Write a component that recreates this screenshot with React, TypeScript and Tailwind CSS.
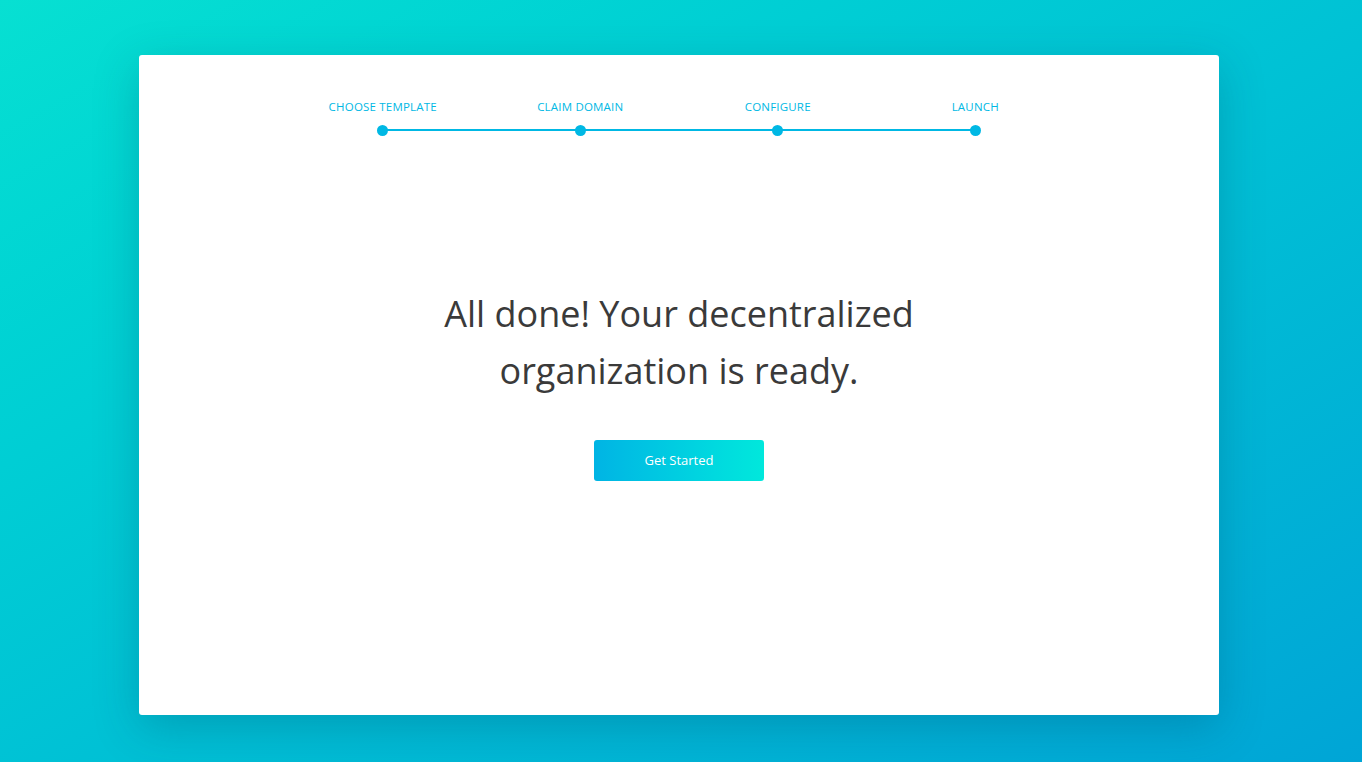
import React from 'react';

const steps = ['Choose Template', 'Claim Domain', 'Configure', 'Launch'];

const Stepper = () => (
  <div className="relative mx-auto grid w-[790px] grid-cols-4">
    <div className="absolute left-[12.5%] right-[12.5%] top-[29px] h-[2px] bg-[#00b8e4]" />
    {steps.map((step) => (
      <div key={step} className="relative flex flex-col items-center">
        <span className="text-[11.5px] uppercase leading-[14px] tracking-[0.2px] text-[#00b8e4]">{step}</span>
        <span className="mt-[11px] h-[11px] w-[11px] rounded-full bg-[#00b8e4]" />
      </div>
    ))}
  </div>
);

const App = () => {
  return (
    <div
      className="flex h-[762px] w-full justify-center bg-gradient-to-br from-[#07e0d2] to-[#00a5d6] pt-[55px]"
      style={{ fontFamily: '"Open Sans", "Liberation Sans", sans-serif' }}
    >
      <div className="mr-[4px] flex h-[660px] w-[1080px] flex-col rounded-[3px] bg-white pt-[45px] shadow-[0_12px_45px_rgba(0,60,90,0.25)]">
        <Stepper />
        <div className="flex flex-1 flex-col items-center pt-[149px]">
          <h1 className="text-center text-[36px] font-normal leading-[57px] text-[#3a3a3a]">
            All done! Your decentralized
            <br />
            organization is ready.
          </h1>
          <button className="mt-[41px] h-[41px] w-[170px] rounded-[3px] bg-gradient-to-r from-[#00b4e4] to-[#00e8dc] text-[13px] text-white">
            Get Started
          </button>
        </div>
      </div>
    </div>
  );
};

export default App;
